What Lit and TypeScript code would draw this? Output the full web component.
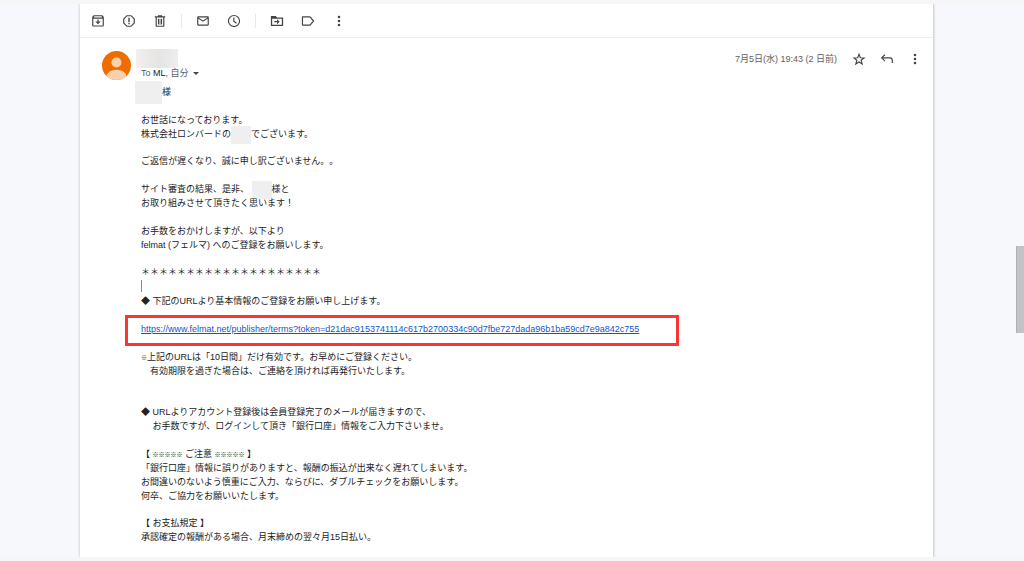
import { LitElement, html, css, svg } from "lit";
import { customElement } from "lit/decorators.js";

const icons = {
  archive: svg`<path fill-rule="evenodd" d="M4.500 2h15l2.500 3v14.500q0 2-2 2H4q-2 0-2-2V5zM4 8v11.500h16V8zM5 5.800h14L18.200 4H5.800zM11 9.500h2v3.500h3.500L12 17.500 7.500 13H11z"/>`,
  spam: svg`<path fill-rule="evenodd" d="M8 2h8l6 6v8l-6 6H8l-6-6V8zM8.800 4L4 8.800v6.400L8.800 20h6.400L20 15.200V8.800L15.200 4zM10.800 6.500h2.400v7h-2.400zM10.800 15h2.400v2.400h-2.400z"/>`,
  trash: svg`<path fill-rule="evenodd" d="M8.500 2h7v2H21v2.200h-1.500V20q0 2-2 2h-11q-2 0-2-2V6.200H3V4h5.500zM6.500 6.200V20h11V6.200zM8.500 8H11v10H8.500zM13 8h2.500v10H13z"/>`,
  mail: svg`<path fill-rule="evenodd" d="M4 4h16q2 0 2 2v12q0 2-2 2H4q-2 0-2-2V6q0-2 2-2zM4 8.200V18h16V8.200l-8 5zM4 6l8 5 8-5z"/>`,
  clock: svg`<circle cx="12" cy="12" r="9.500" fill="none" stroke="currentColor" stroke-width="2"/><path fill="none" stroke="currentColor" stroke-width="2" d="M11.700 6V12.500l4.500 3.500"/>`,
  move: svg`<path fill-rule="evenodd" d="M1.500 3.500h8.500l2 2.300h10.500V20.500h-21zM3.700 8v10.300h16.600V8zM12 9l4.500 4.200-4.500 4.200v-3.200H7.500v-2H12z"/>`,
  label: svg`<path fill="none" stroke="currentColor" stroke-width="2" stroke-linejoin="round" d="M2.500 5h13L21.500 12l-6 7h-13z"/>`,
  more: svg`<circle cx="12" cy="5" r="2.200"/><circle cx="12" cy="12" r="2.200"/><circle cx="12" cy="19" r="2.200"/>`,
  star: svg`<path fill="none" stroke="currentColor" stroke-width="2" d="M12 4l2.300 5.800 6.400.400-5 4 1.700 6.200L12 17l-5.400 3.400 1.700-6.200-5-4 6.400-.400z"/>`,
  reply: svg`<path fill="none" stroke="currentColor" stroke-width="2" d="M8.500 4.500L3 10l5.500 5.500M3 10H17q4 0 4 4V19"/>`,
};

@customElement("app-root")
export class AppRoot extends LitElement {
  static styles = css`
    :host {
      display: grid;
      grid-template-columns: 80px minmax(0, 1fr) 83px 8px;
      box-sizing: border-box;
      min-height: 100vh;
      border-block: 4px solid #f6f6f6;
      background: #f6f8fc;
      color: #222;
      font-family: "Liberation Sans", "Noto Sans CJK JP", sans-serif;
      font-size: 9px;
      line-height: 14px;
      text-spacing-trim: space-all;
    }
    .card {
      grid-column: 2;
      background: #fff;
      box-shadow: 1px 0 2px #c4c6ca, -1px 0 2px #d8dade;
      clip-path: inset(0 -4px);
    }
    .track { grid-column: 4; }
    .thumb {
      height: 87px;
      margin-top: 242px;
      box-sizing: border-box;
      background: #c2c3c7;
      border-left: 1px solid #b0b1b5;
    }
    .toolbar {
      display: flex;
      align-items: center;
      gap: 14px;
      height: 33px;
      padding-left: 11px;
      border-bottom: 1px solid #eceff1;
    }
    .group { display: flex; gap: 17px; }
    .rule { width: 1px; height: 14px; background: #e8e8e8; }
    button {
      display: block;
      flex: none;
      padding: 0;
      border: 0;
      background: none;
      color: #444;
      font: inherit;
    }
    button svg { display: block; width: 14px; height: 14px; fill: currentColor; }
    .message {
      display: grid;
      grid-template-columns: 29px minmax(0, 1fr);
      column-gap: 10px;
      padding: 11px 11px 11px 22px;
    }
    .avatar { display: block; width: 29px; height: 29px; margin-top: 2px; }
    .head { display: flex; justify-content: space-between; align-items: flex-start; }
    .hidden-name {
      width: 42px;
      height: 19px;
      margin-left: -5px;
      background: linear-gradient(90deg, #f3efee, #e4e4e4 55%, #eee);
    }
    .to { display: flex; align-items: center; gap: 4px; color: #5e5e5e; line-height: 10px; }
    .to b { font-weight: 400; color: #222; }
    .caret { border: 3px solid transparent; border-top-color: #444; border-bottom: 0; }
    .meta { display: flex; align-items: center; gap: 14px; color: #5e5e5e; height: 20px; }
    .meta time { margin-right: 1px; }
    .body { grid-column: 2; display: grid; gap: 13px; margin-top: 5px; }
    section { display: grid; gap: 14px; }
    .spaced { padding-bottom: 14px; }
    p { margin: 0; white-space: pre-wrap; }
    .line { display: block; height: 14px; }
    .mask {
      display: inline-block;
      width: 20px;
      height: 18px;
      margin-block: -4px;
      vertical-align: middle;
      background: #efefef;
    }
    .mask.first { width: 27px; height: 23px; margin-left: -6px; }
    .caret-line { display: block; width: 1px; height: 12px; margin: 1px 0; background: #888; }
    .mark { font-size: 6px; font-weight: 700; }
    .boxed { position: relative; width: max-content; }
    .boxed::after {
      content: "";
      position: absolute;
      inset: -7px -40px -10px -16px;
      border: 3px solid #fb3434;
      pointer-events: none;
    }
    a { color: #15c; text-decoration: underline; }
  `;

  private button(name: keyof typeof icons, label: string) {
    return html`<button type="button" aria-label=${label}><svg viewBox="0 0 24 24" aria-hidden="true">${icons[name]}</svg></button>`;
  }

  private lines(...items: unknown[]) {
    return html`<p>${items.map((item) => html`<span class="line">${item}</span>`)}</p>`;
  }

  render() {
    const url = "https://www.felmat.net/publisher/terms?token=d21dac9153741114c617b2700334c90d7fbe727dada96b1ba59cd7e9a842c755";
    const mask = html`<span class="mask"></span>`;
    const marks = html`<span class="mark">※※※※※</span>`;
    return html`
      <main class="card" lang="ja">
        <nav class="toolbar">
          <div class="group">
            ${this.button("archive", "アーカイブ")}
            ${this.button("spam", "迷惑メールを報告")}
            ${this.button("trash", "削除")}
          </div>
          <span class="rule"></span>
          <div class="group">
            ${this.button("mail", "未読にする")}
            ${this.button("clock", "スヌーズ")}
          </div>
          <span class="rule"></span>
          <div class="group">
            ${this.button("move", "移動")}
            ${this.button("label", "ラベル")}
            ${this.button("more", "その他")}
          </div>
        </nav>
        <article class="message">
          <svg class="avatar" viewBox="0 0 29 29" aria-hidden="true">
            <defs><clipPath id="disc"><circle cx="14.500" cy="14.500" r="14.500"/></clipPath></defs>
            <g clip-path="url(#disc)">
              <path fill="#ef6c00" d="M0 0h29v29H0z"/>
              <circle cx="14.500" cy="11.500" r="5" fill="#fbd0ad"/>
              <ellipse cx="14.500" cy="25" rx="9.700" ry="6.300" fill="#fbd0ad"/>
            </g>
          </svg>
          <header class="head">
            <div>
              <div class="hidden-name"></div>
              <div class="to"><span>To <b>ML</b>, 自分</span><span class="caret"></span></div>
            </div>
            <div class="meta">
              <time>7月5日(水) 19:43 (2 日前)</time>
              ${this.button("star", "スター")}
              ${this.button("reply", "返信")}
              ${this.button("more", "その他")}
            </div>
          </header>
          <div class="body">
            <section>
              ${this.lines(html`<span class="mask first"></span>様`)}
              ${this.lines("お世話になっております。", html`株式会社ロンバードの${mask}でございます。`)}
            </section>
            <section>
              ${this.lines("ご返信が遅くなり、誠に申し訳ございません。。")}
              ${this.lines(html`サイト審査の結果、是非、 ${mask}様と`, "お取り組みさせて頂きたく思います！")}
              ${this.lines("お手数をおかけしますが、以下より", "felmat (フェルマ) へのご登録をお願いします。")}
            </section>
            <section class="spaced">
              ${this.lines("＊".repeat(20), html`<span class="caret-line"></span>`, "◆ 下記のURLより基本情報のご登録をお願い申し上げます。")}
              <p class="boxed"><a href=${url}>${url}</a></p>
              ${this.lines(html`<span class="mark">※</span>上記のURLは「10日間」だけ有効です。お早めにご登録ください。`, "　有効期限を過ぎた場合は、ご連絡を頂ければ再発行いたします。")}
            </section>
            <section>
              ${this.lines("◆ URLよりアカウント登録後は会員登録完了のメールが届きますので、", "　 お手数ですが、ログインして頂き「銀行口座」情報をご入力下さいませ。")}
              ${this.lines(html`【 ${marks} ご注意 ${marks} 】`, "「銀行口座」情報に誤りがありますと、報酬の振込が出来なく遅れてしまいます。", "お間違いのないよう慎重にご入力、ならびに、ダブルチェックをお願いします。", "何卒、ご協力をお願いいたします。")}
            </section>
            <section>
              ${this.lines("【 お支払規定 】", "承認確定の報酬がある場合、月末締めの翌々月15日払い。")}
            </section>
          </div>
        </article>
      </main>
      <div class="track"><div class="thumb"></div></div>
    `;
  }
}
